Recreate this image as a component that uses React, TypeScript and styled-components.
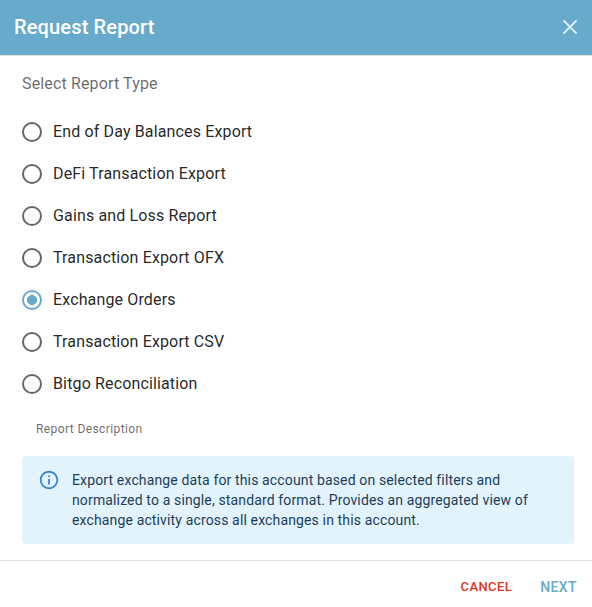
import React, { useState } from 'react';
import styled, { createGlobalStyle, css } from 'styled-components';

const colors = {
    PRIMARY: '#67aacb',
    ERROR: '#e03524',
    TYPE_DARK: 'rgba(0, 0, 0, 0.87)',
    TYPE_GREY: 'rgba(0, 0, 0, 0.6)',
    BG_INFO: '#e3f3fc',
    TYPE_INFO: '#1a3e5a',
    ICON_INFO: '#3f87d6',
    DIVIDER: '#e0e0e0',
};

const GlobalStyle = createGlobalStyle`
    * {
        box-sizing: border-box;
    }

    body {
        margin: 0;
        overflow: hidden;
        background: #fff;
        font-family: Roboto, 'Liberation Sans', sans-serif;
        -webkit-font-smoothing: antialiased;
    }
`;

const Dialog = styled.div`
    display: flex;
    flex-direction: column;
    width: 100%;
    height: 100vh;
    overflow: hidden;
`;

const Header = styled.header`
    display: flex;
    flex: 0 0 auto;
    align-items: center;
    justify-content: space-between;
    height: 56px;
    padding: 0 14px 1px;
    border-bottom: 1px solid ${colors.DIVIDER};
    background: ${colors.PRIMARY};
`;

const Title = styled.h2`
    margin: 0;
    font-size: 20px;
    font-weight: 500;
    line-height: 32px;
    letter-spacing: 0.15px;
    color: #fff;
`;

const CloseButton = styled.button`
    display: flex;
    padding: 0;
    border: 0;
    background: none;
    color: rgba(255, 255, 255, 0.85);
    cursor: pointer;
`;

const Content = styled.div`
    display: flex;
    flex: 0 0 auto;
    flex-direction: column;
    padding: 16px 18px 16px 22px;
    border-bottom: 1px solid ${colors.DIVIDER};
`;

const GroupLabel = styled.div`
    margin-bottom: 16px;
    font-size: 16px;
    line-height: 23px;
    letter-spacing: 0.14px;
    color: ${colors.TYPE_GREY};
`;

const Option = styled.label`
    display: flex;
    align-items: center;
    height: 42px;
    cursor: pointer;
`;

const RadioInput = styled.input<{ checked: boolean }>`
    flex: 0 0 auto;
    width: 20px;
    height: 20px;
    margin: 0 11px 0 0;
    appearance: none;
    border: 2px solid ${colors.TYPE_GREY};
    border-radius: 50%;

    ${props =>
        props.checked &&
        css`
            border-color: ${colors.PRIMARY};
            background: radial-gradient(circle, ${colors.PRIMARY} 4.7px, transparent 5.3px);
        `}
`;

const OptionText = styled.span`
    font-size: 16px;
    line-height: 24px;
    letter-spacing: 0.14px;
    color: ${colors.TYPE_DARK};
`;

const DescriptionLabel = styled.div`
    margin: 14px 0 17px 14px;
    font-size: 12px;
    line-height: 20px;
    letter-spacing: 0.4px;
    color: ${colors.TYPE_GREY};
`;

const InfoBox = styled.div`
    display: flex;
    height: 88px;
    padding: 13px 16px;
    border-radius: 4px;
    background: ${colors.BG_INFO};
`;

const InfoIcon = styled.svg`
    flex: 0 0 auto;
    width: 22px;
    height: 22px;
    margin-right: 12px;
    fill: ${colors.ICON_INFO};
`;

const InfoText = styled.p`
    margin: 1px 0 0;
    font-size: 14px;
    line-height: 20px;
    letter-spacing: 0.14px;
    color: ${colors.TYPE_INFO};
`;

const Actions = styled.footer`
    display: flex;
    flex: 0 0 auto;
    align-items: center;
    justify-content: flex-end;
    gap: 28px;
    height: 52px;
    padding: 0 15px;
`;

const ActionButton = styled.button<{ variant: 'danger' | 'primary' }>`
    padding: 0;
    border: 0;
    background: none;
    font-family: inherit;
    font-size: ${props => (props.variant === 'danger' ? '13px' : '14px')};
    font-weight: 500;
    line-height: 22px;
    letter-spacing: 0.4px;
    text-transform: uppercase;
    color: ${props => (props.variant === 'danger' ? colors.ERROR : colors.PRIMARY)};
    cursor: pointer;
`;

const reportTypes = [
    'End of Day Balances Export',
    'DeFi Transaction Export',
    'Gains and Loss Report',
    'Transaction Export OFX',
    'Exchange Orders',
    'Transaction Export CSV',
    'Bitgo Reconciliation',
];

const App = () => {
    const [selected, setSelected] = useState('Exchange Orders');

    return (
        <>
            <GlobalStyle />
            <Dialog role="dialog" aria-labelledby="dialog-title">
                <Header>
                    <Title id="dialog-title">Request Report</Title>
                    <CloseButton aria-label="Close">
                        <svg width="16" height="16" viewBox="0 0 16 16">
                            <path
                                d="M1.4 1.4 14.6 14.6M14.6 1.4 1.4 14.6"
                                stroke="currentColor"
                                strokeWidth="1.8"
                            />
                        </svg>
                    </CloseButton>
                </Header>
                <Content>
                    <GroupLabel>Select Report Type</GroupLabel>
                    {reportTypes.map(type => (
                        <Option key={type}>
                            <RadioInput
                                type="radio"
                                name="report-type"
                                checked={selected === type}
                                onChange={() => setSelected(type)}
                            />
                            <OptionText>{type}</OptionText>
                        </Option>
                    ))}
                    <DescriptionLabel>Report Description</DescriptionLabel>
                    <InfoBox>
                        <InfoIcon viewBox="0 0 24 24">
                            <path d="M11 7h2v2h-2zm0 4h2v6h-2zm1-9C6.48 2 2 6.48 2 12s4.48 10 10 10 10-4.48 10-10S17.52 2 12 2m0 18c-4.41 0-8-3.59-8-8s3.59-8 8-8 8 3.59 8 8-3.59 8-8 8" />
                        </InfoIcon>
                        <InfoText>
                            Export exchange data for this account based on selected filters and
                            normalized to a single, standard format. Provides an aggregated view of
                            exchange activity across all exchanges in this account.
                        </InfoText>
                    </InfoBox>
                </Content>
                <Actions>
                    <ActionButton variant="danger">Cancel</ActionButton>
                    <ActionButton variant="primary">Next</ActionButton>
                </Actions>
            </Dialog>
        </>
    );
};

export default App;
